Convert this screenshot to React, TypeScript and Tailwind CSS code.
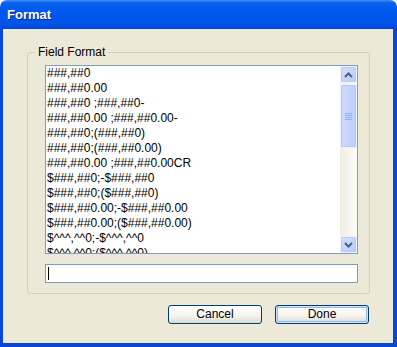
// Format dialog (XP Luna look): field format list with a fake scrollbar, entry box, Cancel / Done
import React from 'react';

const formats = [
  '###,##0',
  '###,##0.00',
  '###,##0 ;###,##0-',
  '###,##0.00 ;###,##0.00-',
  '###,##0;(###,##0)',
  '###,##0;(###,##0.00)',
  '###,##0.00 ;###,##0.00CR',
  '$###,##0;-$###,##0',
  '$###,##0;($###,##0)',
  '$###,##0.00;-$###,##0.00',
  '$###,##0.00;($###,##0.00)',
  '$^^^,^^0;-$^^^,^^0',
  '$^^^,^^0;($^^^,^^0)',
];

function Chevron({ down }: { down?: boolean }) {
  return (
    <svg width="9" height="6" viewBox="0 0 9 6" className={down ? 'rotate-180' : ''}>
      <path d="M1 5 L4.5 1.5 L8 5" fill="none" stroke="#4d6185" strokeWidth="2" />
    </svg>
  );
}

function ScrollButton({ down }: { down?: boolean }) {
  return (
    <div className="h-[17px] w-[17px] rounded-[2px] border border-[#f0f4fe] bg-[linear-gradient(135deg,#d3e0fd,#b6cbf8)] shadow-[inset_0_0_0_1px_#b8ccf7] flex items-center justify-center">
      <Chevron down={down} />
    </div>
  );
}

export default function App() {
  return (
    <div className="w-[397px] h-[347px] flex flex-col font-['Liberation_Sans',Arial,sans-serif] text-black">
      {/* タイトルバー */}
      <div className="h-[29px] shrink-0 rounded-t-[7px] bg-[linear-gradient(180deg,#3d8ff9_0%,#0a62ef_10%,#0058ee_35%,#0055e8_80%,#0046d3_100%)] flex items-center pl-[7px]">
        <span className="text-white font-bold text-[13px] [text-shadow:1px_1px_0_#0a2a8f]">Format</span>
      </div>

      {/* 本体 */}
      <div className="flex-1 flex flex-col bg-[#ece9d8] border-l-[3px] border-r-[4px] border-b-[4px] border-[#0846d8]">
        <fieldset className="ml-[24px] mt-[16px] w-[343px] border border-[#d0d0bf] rounded-[3px] p-0">
          <legend className="ml-[7px] px-[3px] text-[12px] leading-[14px]">Field Format</legend>
          <div className="pl-[17px] pb-[10px]">
            {/* 書式一覧（最終行は枠で途中まで見える） */}
            <div className="mt-[6px] w-[313px] h-[189px] border border-[#7f9db9] bg-white flex">
              <div className="flex-1 overflow-hidden">
                {formats.map((f) => (
                  <div key={f} className="h-[15px] leading-[15px] text-[12px] pl-[1px] whitespace-pre">
                    {f}
                  </div>
                ))}
              </div>
              <div className="w-[17px] flex flex-col bg-[linear-gradient(90deg,#efede3,#fcfcf9)]">
                <ScrollButton />
                <div className="h-[64px] mt-[1px] rounded-[2px] border border-[#f0f4fe] bg-[linear-gradient(90deg,#cddbfd,#bccefa)] shadow-[inset_0_0_0_1px_#b4c8f6] flex flex-col items-center justify-center gap-[1px]">
                  <div className="w-[7px] h-[1px] bg-[#8cb0f8]" />
                  <div className="w-[7px] h-[1px] bg-[#8cb0f8]" />
                  <div className="w-[7px] h-[1px] bg-[#8cb0f8]" />
                  <div className="w-[7px] h-[1px] bg-[#8cb0f8]" />
                </div>
                <div className="flex-1" />
                <ScrollButton down />
              </div>
            </div>

            {/* 入力欄 */}
            <div className="mt-[10px] w-[313px] h-[19px] border border-[#7f9db9] bg-white flex items-center">
              <span className="ml-[2px] w-[1px] h-[13px] bg-black" />
            </div>
          </div>
        </fieldset>

        {/* ボタン */}
        <div className="mt-[11px] flex justify-end gap-[13px] pr-[24px]">
          <button className="w-[94px] h-[19px] rounded-[3px] border border-[#003c74] bg-[linear-gradient(180deg,#ffffff_0%,#f4f3ee_60%,#dcd8cc_100%)] text-[12px] leading-[15px]">
            Cancel
          </button>
          <button className="w-[94px] h-[19px] rounded-[3px] border border-[#003c74] bg-[linear-gradient(180deg,#ffffff_0%,#f4f3ee_60%,#dcd8cc_100%)] shadow-[inset_0_0_0_1px_#cee7ff,inset_0_0_0_2px_#98b8ea] text-[12px] leading-[15px]">
            Done
          </button>
        </div>
      </div>
    </div>
  );
}
